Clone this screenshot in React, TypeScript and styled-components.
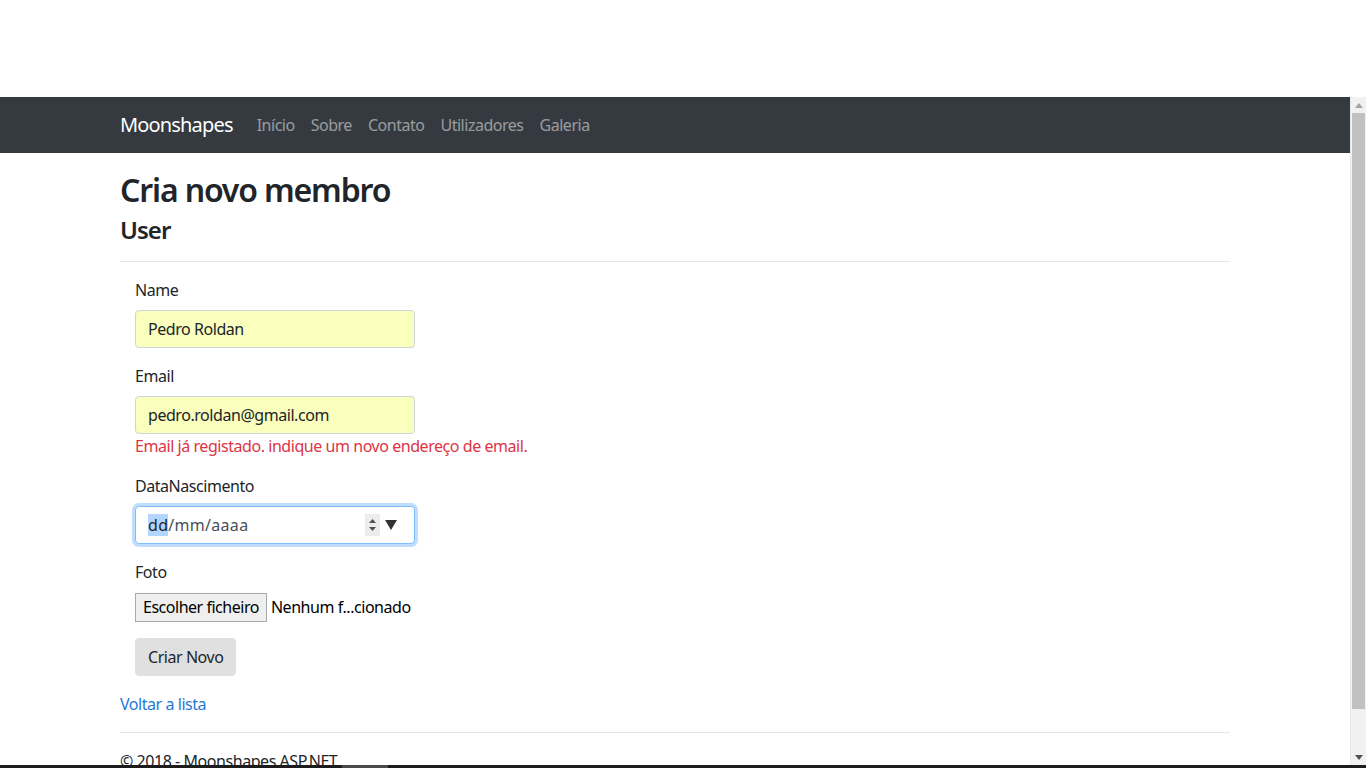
import React from 'react';
import styled, { createGlobalStyle } from 'styled-components';

const FONT = '"Segoe UI", "Noto Sans", "Liberation Sans", sans-serif';

const GlobalStyle = createGlobalStyle`
	html, body {
		margin: 0;
		padding: 0;
		background: #fff;
	}
	body {
		font-family: ${FONT};
		color: #212529;
		font-size: 16px;
		line-height: 1.5;
		letter-spacing: -0.028em;
	}
	* {
		box-sizing: border-box;
	}
`;

const navLinks = ['Início', 'Sobre', 'Contato', 'Utilizadores', 'Galeria'];

const App: React.FC = () => {
	return (
		<>
			<GlobalStyle />
			<Screen>
				<TopBlank />
				<Viewport>
					<Page>
						<Navbar>
							<Container>
								<NavInner>
									<Brand>Moonshapes</Brand>
									<NavList>
										{navLinks.map((link) => (
											<NavLink key={link}>{link}</NavLink>
										))}
									</NavList>
								</NavInner>
							</Container>
						</Navbar>
						<Container>
							<Body>
								<Title>Cria novo membro</Title>
								<SubTitle>User</SubTitle>
								<Rule />
								<FormColumn>
									<FormGroup>
										<Label>Name</Label>
										<TextInput autofilled>Pedro Roldan</TextInput>
									</FormGroup>
									<FormGroup>
										<Label>Email</Label>
										<TextInput autofilled>pedro.roldan@gmail.com</TextInput>
										<ErrorText>Email já registado. indique um novo endereço de email.</ErrorText>
									</FormGroup>
									<FormGroup>
										<Label>DataNascimento</Label>
										<TextInput focused>
											<DateText>
												<Selected>dd</Selected>/mm/aaaa
											</DateText>
											<DateControls>
												<Spinner>
													<svg width="9" height="16" viewBox="0 0 9 16">
														<path d="M1 6 L4.5 2 L8 6 Z" fill="#505050" />
														<path d="M1 10 L4.5 14 L8 10 Z" fill="#505050" />
													</svg>
												</Spinner>
												<svg width="12" height="10" viewBox="0 0 12 10">
													<path d="M0 0 L12 0 L6 10 Z" fill="#333" />
												</svg>
											</DateControls>
										</TextInput>
									</FormGroup>
									<FormGroup>
										<Label>Foto</Label>
										<FileRow>
											<FileButton>Escolher ficheiro</FileButton>
											<FileName>Nenhum f...cionado</FileName>
										</FileRow>
									</FormGroup>
									<SubmitButton>Criar Novo</SubmitButton>
								</FormColumn>
								<BackLink>Voltar a lista</BackLink>
								<Rule />
								<Footer>© 2018 - Moonshapes ASP.NET</Footer>
							</Body>
						</Container>
					</Page>
					<Scrollbar>
						<ScrollArrow>
							<svg width="8" height="5" viewBox="0 0 8 5">
								<path d="M0 5 L4 0 L8 5 Z" fill="#a3a3a3" />
							</svg>
						</ScrollArrow>
						<ScrollTrack>
							<ScrollThumb />
						</ScrollTrack>
						<ScrollArrow>
							<svg width="8" height="5" viewBox="0 0 8 5">
								<path d="M0 0 L8 0 L4 5 Z" fill="#505050" />
							</svg>
						</ScrollArrow>
					</Scrollbar>
				</Viewport>
				<Taskbar>
					<TaskbarGap />
					<TaskbarItem />
				</Taskbar>
			</Screen>
		</>
	);
};

const Screen = styled.div`
	width: 1366px;
	height: 768px;
	display: flex;
	flex-direction: column;
	overflow: hidden;
`;

const TopBlank = styled.div`
	height: 97px;
	flex: none;
	background: #fff;
`;

const Viewport = styled.div`
	flex: 1;
	min-height: 0;
	display: flex;
`;

const Page = styled.div`
	flex: 1;
	min-width: 0;
	overflow: hidden;
`;

const Navbar = styled.nav`
	height: 56px;
	background: #343a40;
	display: flex;
	align-items: center;
`;

const Container = styled.div`
	width: 1140px;
	margin: 0 auto;
	padding: 0 15px;
`;

const NavInner = styled.div`
	display: flex;
	align-items: center;
`;

const Brand = styled.a`
	font-size: 20px;
	line-height: 30px;
	letter-spacing: -0.042em;
	color: #fff;
	margin-right: 16px;
`;

const NavList = styled.div`
	display: flex;
`;

const NavLink = styled.a`
	padding: 8px;
	font-size: 16px;
	line-height: 24px;
	letter-spacing: -0.03em;
	color: rgba(255, 255, 255, 0.5);
`;

const Body = styled.main`
	padding-top: 18px;
`;

const Title = styled.h2`
	margin: 0 0 7px;
	font-size: 32px;
	font-weight: 600;
	line-height: 1.2;
	letter-spacing: -0.036em;
`;

const SubTitle = styled.h4`
	margin: 0 0 8px;
	font-size: 24px;
	font-weight: 600;
	line-height: 1.2;
	letter-spacing: -0.04em;
`;

const Rule = styled.hr`
	margin: 16px 0;
	border: 0;
	border-top: 1px solid rgba(0, 0, 0, 0.1);
`;

const FormColumn = styled.div`
	padding: 0 15px;
	width: 310px;
	margin-bottom: 16px;
`;

const FormGroup = styled.div`
	margin-bottom: 16px;
`;

const Label = styled.label`
	display: block;
	margin-bottom: 8px;
	line-height: 24px;
`;

const TextInput = styled.div<{ autofilled?: boolean; focused?: boolean }>`
	display: flex;
	align-items: center;
	justify-content: space-between;
	width: 280px;
	height: 38px;
	padding: 6px 12px;
	font-size: 16px;
	line-height: 24px;
	color: #212529;
	border-radius: 4px;
	border: 1px solid ${(p) => (p.focused ? '#80bdff' : '#ced4da')};
	background: ${(p) => (p.autofilled ? 'rgb(250, 255, 189)' : '#fff')};
	box-shadow: ${(p) => (p.focused ? '0 0 0 3px rgba(0, 123, 255, 0.25)' : 'none')};
`;

const DateText = styled.span`
	color: #495057;
	letter-spacing: 0.3px;
`;

const Selected = styled.span`
	background: #b3d4fc;
	color: #212529;
`;

const DateControls = styled.span`
	display: flex;
	align-items: center;
	gap: 5px;
	margin-right: 5px;
`;

const Spinner = styled.span`
	display: flex;
	align-items: center;
	justify-content: center;
	width: 15px;
	height: 22px;
	background: #ececec;
`;

const ErrorText = styled.span`
	display: block;
	color: #dc3545;
	line-height: 24px;
	white-space: nowrap;
`;

const FileRow = styled.div`
	display: flex;
	align-items: center;
	height: 30px;
	white-space: nowrap;
`;

const FileButton = styled.button`
	flex: none;
	font-family: ${FONT};
	font-size: 16px;
	letter-spacing: -0.03em;
	line-height: 20px;
	height: 29px;
	padding: 0 7px;
	color: #000;
	background: #efefef;
	border: 1px solid #a9a9a9;
	border-radius: 0;
	margin-right: 4px;
	white-space: nowrap;
`;

const FileName = styled.span`
	font-size: 16px;
	color: #000;
`;

const SubmitButton = styled.button`
	font-family: ${FONT};
	font-size: 16px;
	letter-spacing: -0.028em;
	line-height: 24px;
	height: 38px;
	padding: 6px 12px;
	color: #212529;
	background: #e0e0e0;
	border: 1px solid #e0e0e0;
	border-radius: 4px;
`;

const BackLink = styled.a`
	display: inline-block;
	color: #1f7ad6;
	line-height: 24px;
`;

const Footer = styled.footer`
	line-height: 24px;
	color: #212529;
`;

const Scrollbar = styled.div`
	width: 16px;
	flex: none;
	display: flex;
	flex-direction: column;
	background: #f1f1f1;
	border-left: 1px solid #e8e8e8;
`;

const ScrollArrow = styled.div`
	height: 16px;
	flex: none;
	display: flex;
	align-items: center;
	justify-content: center;
`;

const ScrollTrack = styled.div`
	flex: 1;
	padding: 0 1px;
`;

const ScrollThumb = styled.div`
	height: 596px;
	background: #c1c1c1;
`;

const Taskbar = styled.div`
	height: 3px;
	flex: none;
	background: #1c1c1c;
	display: flex;
`;

const TaskbarGap = styled.div`
	width: 342px;
`;

const TaskbarItem = styled.div`
	width: 46px;
	background: #4a4a4a;
`;

export default App;
